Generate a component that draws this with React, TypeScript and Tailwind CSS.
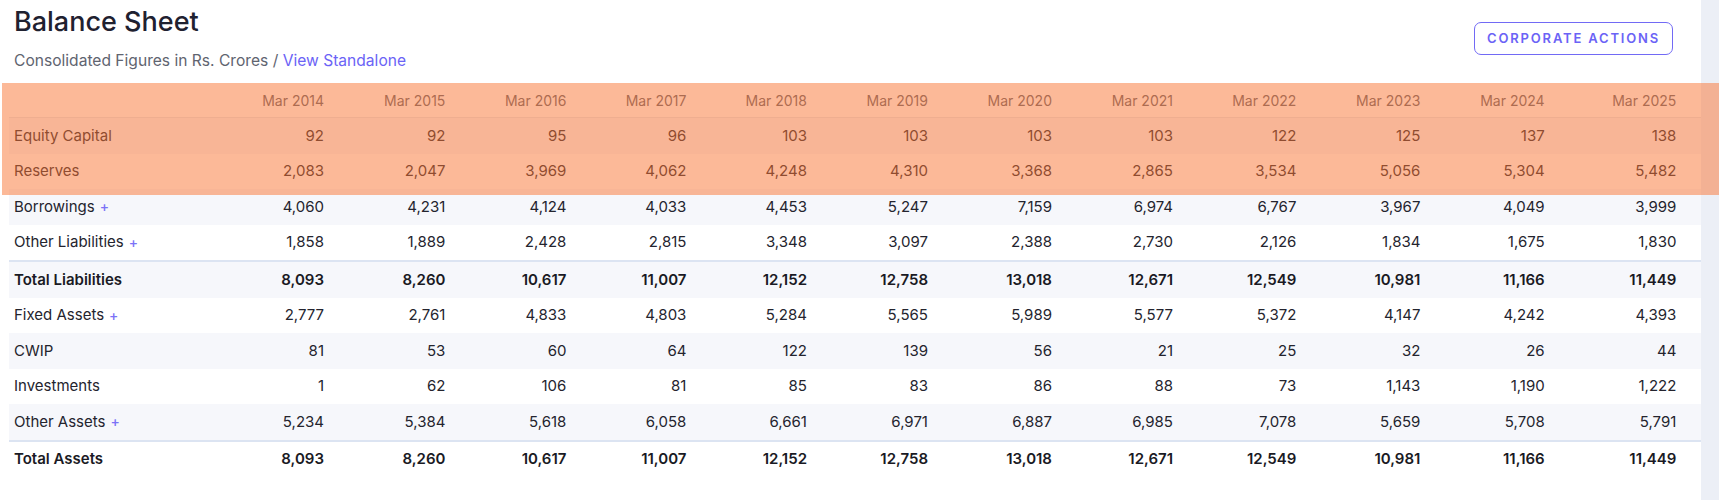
import React from 'react';

const years = [
  'Mar 2014', 'Mar 2015', 'Mar 2016', 'Mar 2017', 'Mar 2018', 'Mar 2019',
  'Mar 2020', 'Mar 2021', 'Mar 2022', 'Mar 2023', 'Mar 2024', 'Mar 2025',
];

type Row = { label: string; values: string[]; plus?: boolean; total?: boolean };

const rows: Row[] = [
  { label: 'Equity Capital', values: ['92', '92', '95', '96', '103', '103', '103', '103', '122', '125', '137', '138'] },
  { label: 'Reserves', values: ['2,083', '2,047', '3,969', '4,062', '4,248', '4,310', '3,368', '2,865', '3,534', '5,056', '5,304', '5,482'] },
  { label: 'Borrowings', plus: true, values: ['4,060', '4,231', '4,124', '4,033', '4,453', '5,247', '7,159', '6,974', '6,767', '3,967', '4,049', '3,999'] },
  { label: 'Other Liabilities', plus: true, values: ['1,858', '1,889', '2,428', '2,815', '3,348', '3,097', '2,388', '2,730', '2,126', '1,834', '1,675', '1,830'] },
  { label: 'Total Liabilities', total: true, values: ['8,093', '8,260', '10,617', '11,007', '12,152', '12,758', '13,018', '12,671', '12,549', '10,981', '11,166', '11,449'] },
  { label: 'Fixed Assets', plus: true, values: ['2,777', '2,761', '4,833', '4,803', '5,284', '5,565', '5,989', '5,577', '5,372', '4,147', '4,242', '4,393'] },
  { label: 'CWIP', values: ['81', '53', '60', '64', '122', '139', '56', '21', '25', '32', '26', '44'] },
  { label: 'Investments', values: ['1', '62', '106', '81', '85', '83', '86', '88', '73', '1,143', '1,190', '1,222'] },
  { label: 'Other Assets', plus: true, values: ['5,234', '5,384', '5,618', '6,058', '6,661', '6,971', '6,887', '6,985', '7,078', '5,659', '5,708', '5,791'] },
  { label: 'Total Assets', total: true, values: ['8,093', '8,260', '10,617', '11,007', '12,152', '12,758', '13,018', '12,671', '12,549', '10,981', '11,166', '11,449'] },
];

// column widths measured off the reference
const cols =
  'grid grid-cols-[202px_121px_121.4px_121px_120px_120.6px_121px_124px_121px_123.4px_124px_124.3px_147.7px]';

export default function App() {
  return (
    <div className="relative flex h-[500px] w-full overflow-hidden bg-white font-['Inter',sans-serif]">
      <div className="min-w-0 flex-1">
        {/* heading */}
        <div className="flex h-[82px] items-start justify-between pl-[14px] pr-7">
          <div className="pt-[5px]">
            <h2 className="text-[27px] font-medium leading-[34px] text-[#1f2130]">Balance Sheet</h2>
            <p className="mt-[10px] text-[15.6px] leading-[24px] text-[#5f6470]">
              Consolidated Figures in Rs. Crores / <a className="text-[#6b63f6]">View Standalone</a>
            </p>
          </div>
          <button className="mt-[22px] h-[33px] rounded-[7px] border border-[#726af5] px-3 text-[13px] font-semibold uppercase tracking-[0.14em] text-[#6b63f6]">
            Corporate Actions
          </button>
        </div>

        {/* table */}
        <div className="ml-[9px] w-[1692px]">
          <div className={`${cols} h-[36px] items-center border-b border-[#e4e8ef] pt-[2px] text-[14px] text-[#5f6470]`}>
            <div />
            {years.map((y, i) => (
              <div key={y} className={i === years.length - 1 ? 'pr-6 text-right' : 'pr-2 text-right'}>
                {y}
              </div>
            ))}
          </div>

          {rows.map((r, idx) => (
            <div
              key={r.label}
              className={`${cols} items-center text-[15px] ${
                idx % 2 === 0 ? 'bg-[#f6f7fb]' : 'bg-white'
              } ${
                r.total
                  ? 'h-[37.5px] border-t-2 border-[#dce4f2] font-semibold text-[#1a1a24]'
                  : 'h-[35.5px] text-[#24242e]'
              }`}
            >
              <div className="flex items-center pl-[5px]">
                <span>{r.label}</span>
                {r.plus && <span className="ml-[5px] text-[14px] font-medium text-[#7b72f7]">+</span>}
              </div>
              {r.values.map((v, i) => (
                <div key={i} className={i === r.values.length - 1 ? 'pr-6 text-right' : 'pr-2 text-right'}>
                  {v}
                </div>
              ))}
            </div>
          ))}
        </div>
      </div>

      {/* scrollbar track */}
      <div className="w-[18px] shrink-0 bg-[#eceff6]" />

      {/* highlight over the first rows */}
      <div className="pointer-events-none absolute left-[2px] right-0 top-[83px] h-[112px] bg-[rgba(250,115,50,0.5)]" />
    </div>
  );
}
